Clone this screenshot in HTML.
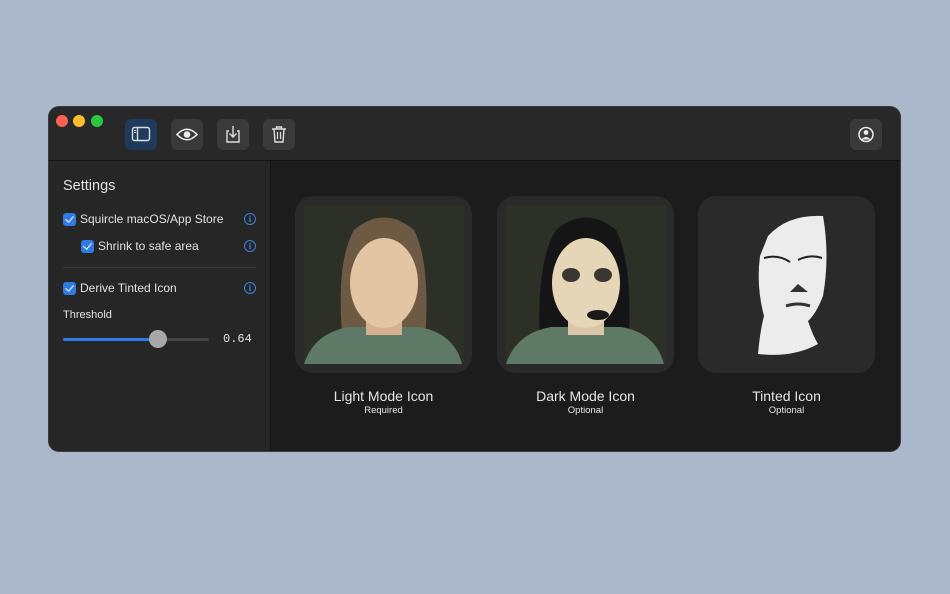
<!DOCTYPE html>
<html><head><style>
*{margin:0;padding:0;box-sizing:border-box}
body{width:950px;height:594px;background:#abb8cc;font-family:"Liberation Sans",sans-serif;position:relative;overflow:hidden}
.win{position:absolute;left:49px;top:107px;width:851px;height:344px;border-radius:10px;background:#1c1c1c;overflow:hidden;box-shadow:0 0 0 1px #3a3a3a}
.tb{position:absolute;left:0;top:0;width:851px;height:54px;background:#282828;border-bottom:1px solid #141414}
.dot{position:absolute;top:8px;width:12px;height:12px;border-radius:50%}
.btn{position:absolute;top:12px;width:32px;height:31px;border-radius:6px;background:#3a3a3a}
.side{position:absolute;left:0;top:54px;width:222px;height:290px;background:#262626;border-right:1px solid #141414}
.t{position:absolute;color:#e2e2e2;font-size:12px;white-space:nowrap}
.cb{position:absolute;width:13px;height:13px;border-radius:3px;background:#2f7ae5}
.cb::after{content:"";position:absolute;left:4px;top:1px;width:3.5px;height:7px;border:solid #fff;border-width:0 1.8px 1.8px 0;transform:rotate(40deg)}
.info{position:absolute;width:12px;height:12px;border:1.2px solid #3b82e0;border-radius:50%;color:#3b82e0;font-size:9px;text-align:center;line-height:10px;font-family:"Liberation Serif",serif;font-weight:bold}
.tile{position:absolute;top:89px;width:177px;height:177px;border-radius:18px;background:#2a2a2a}
.img{position:absolute;left:9px;top:9px;width:160px;height:159px;overflow:hidden;background:#2c2e26}
.lab{position:absolute;top:281px;width:177px;text-align:center;color:#e6e6e6;font-size:14px}
.sub{position:absolute;top:298px;width:177px;text-align:center;color:#e6e6e6;font-size:9.5px}
</style></head><body>
<div class="win">
<div class="tb">
<div class="dot" style="left:7px;background:#fe5f57"></div>
<div class="dot" style="left:24px;background:#febc2e"></div>
<div class="dot" style="left:42px;background:#28c840"></div>
<div class="btn" style="left:76px;background:#1f3a5a"><svg width="32" height="31"><rect x="7.5" y="8.5" width="17" height="13" rx="2" fill="none" stroke="#ddd" stroke-width="1.4"/><line x1="12.5" y1="8.5" x2="12.5" y2="21.5" stroke="#ddd" stroke-width="1.4"/><line x1="9" y1="11.5" x2="11" y2="11.5" stroke="#ddd"/><line x1="9" y1="13.5" x2="11" y2="13.5" stroke="#ddd"/></svg></div>
<div class="btn" style="left:122px"><svg width="32" height="31"><path d="M6 15.5 Q16 5 26 15.5 Q16 26 6 15.5Z" fill="none" stroke="#eee" stroke-width="1.6"/><circle cx="16" cy="15.5" r="3.3" fill="#eee"/></svg></div>
<div class="btn" style="left:168px"><svg width="32" height="31"><path d="M12 12H10V23H22V12H20" fill="none" stroke="#ddd" stroke-width="1.4"/><path d="M16 7V18M12.5 14.5L16 18L19.5 14.5" fill="none" stroke="#ddd" stroke-width="1.4"/></svg></div>
<div class="btn" style="left:214px"><svg width="32" height="31"><path d="M9 10H23M13.5 10V8H18.5V10M11 10L12 23H20L21 10" fill="none" stroke="#ddd" stroke-width="1.4"/><path d="M14.5 13V20M17.5 13V20" stroke="#ddd" stroke-width="1.2"/></svg></div>
<div class="btn" style="left:801px"><svg width="32" height="31"><circle cx="16" cy="15.5" r="7" fill="none" stroke="#eee" stroke-width="1.5"/><circle cx="16" cy="13.5" r="2.4" fill="#eee"/><path d="M11.5 20.5Q16 15.5 20.5 20.5" fill="#eee"/></svg></div>
</div>
<div class="side">
<div class="t" style="left:14px;top:17px;font-size:14.5px">Settings</div>
<div class="cb" style="left:14px;top:52px"></div><div class="t" style="left:31px;top:51px">Squircle macOS/App Store</div><div class="info" style="left:195px;top:52px">i</div>
<div class="cb" style="left:32px;top:79px"></div><div class="t" style="left:49px;top:78px">Shrink to safe area</div><div class="info" style="left:195px;top:79px">i</div>
<div style="position:absolute;left:14px;top:106px;width:193px;height:1px;background:#3c3c3c"></div>
<div class="cb" style="left:14px;top:121px"></div><div class="t" style="left:31px;top:120px">Derive Tinted Icon</div><div class="info" style="left:195px;top:121px">i</div>
<div class="t" style="left:14px;top:148px;font-size:11px">Threshold</div>
<div style="position:absolute;left:14px;top:177px;width:146px;height:3px;border-radius:2px;background:#444"></div>
<div style="position:absolute;left:14px;top:177px;width:95px;height:3px;border-radius:2px;background:#2f7ae5"></div>
<div style="position:absolute;left:100px;top:169px;width:18px;height:18px;border-radius:50%;background:#a8a8a8"></div>
<div class="t" style="left:174px;top:171px;font-family:'Liberation Mono',monospace;font-size:12px">0.64</div>
</div>
<div class="tile" style="left:246px"><div class="img">
<svg width="160" height="159"><rect width="160" height="159" fill="#2d3027"/>
<path d="M40 150Q30 60 50 25Q80 0 110 25Q128 60 120 150Z" fill="#6d5a43"/>
<path d="M0 159Q10 128 45 122L115 122Q150 128 158 159Z" fill="#5e7a66"/>
<rect x="62" y="100" width="36" height="30" fill="#d6b08f"/>
<ellipse cx="80" cy="78" rx="34" ry="45" fill="#e3c4a3"/>
<path d="M46 70Q50 20 80 16Q112 20 114 70Q105 30 80 28Q55 32 46 70Z" fill="#6d5a43"/>
</svg></div></div>
<div class="tile" style="left:448px"><div class="img">
<svg width="160" height="159"><rect width="160" height="159" fill="#2d3027"/>
<path d="M35 155Q28 60 50 25Q80 0 110 25Q128 60 122 150Z" fill="#151515"/>
<path d="M0 159Q10 128 45 122L115 122Q150 128 158 159Z" fill="#5e7a66"/>
<rect x="62" y="100" width="36" height="30" fill="#d9c7a8"/>
<ellipse cx="80" cy="78" rx="34" ry="45" fill="#e6d6b8"/>
<path d="M46 70Q50 20 80 16Q112 20 114 70Q105 30 80 28Q55 32 46 70Z" fill="#151515"/>
<ellipse cx="65" cy="70" rx="9" ry="7" fill="#3a3630"/><ellipse cx="97" cy="70" rx="9" ry="7" fill="#3a3630"/>
<ellipse cx="92" cy="110" rx="11" ry="5" fill="#1a1a1a"/>
</svg></div></div>
<div class="tile" style="left:649px"><svg width="177" height="177" style="position:absolute;left:0;top:0">
<path d="M70 40Q90 18 125 20Q132 60 125 100Q118 118 110 125Q115 140 120 148Q95 162 60 158Q62 135 66 120Q58 90 62 60Z" fill="#ececec"/>
<path d="M66 62Q80 58 92 66M100 64Q112 58 124 62" stroke="#222" stroke-width="2" fill="none"/>
<path d="M92 96L100 88L110 96Z" fill="#333"/><path d="M88 110Q100 106 112 110" stroke="#333" stroke-width="3" fill="none"/>
</svg></div>
<div class="lab" style="left:246px">Light Mode Icon</div><div class="sub" style="left:246px">Required</div>
<div class="lab" style="left:448px">Dark Mode Icon</div><div class="sub" style="left:448px">Optional</div>
<div class="lab" style="left:649px">Tinted Icon</div><div class="sub" style="left:649px">Optional</div>
</div>
</body></html>
